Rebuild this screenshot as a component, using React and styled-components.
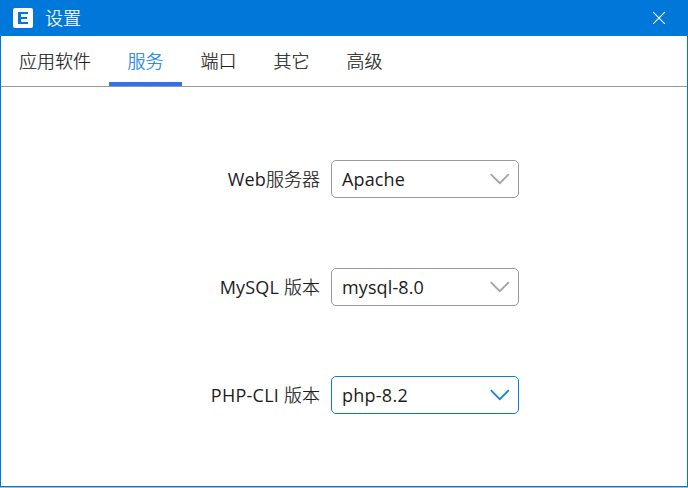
import React, { useState } from "react";
import styled, { createGlobalStyle } from "styled-components";

const GlobalStyle = createGlobalStyle`
  * { box-sizing: border-box; }
  body {
    margin: 0;
    background: #fff;
    font-family: "Open Sans", "Noto Sans CJK SC", sans-serif;
    font-size: 18px;
    color: #1c1c1c;
  }
  button { font: inherit; color: inherit; border: 0; padding: 0; background: none; }
`;

const Window = styled.div`
  width: 688px;
  height: 488px;
  display: flex;
  flex-direction: column;
  background: #fff;
  border: 1px solid #0078d9;
  border-top: 0;
  border-bottom: 0;
`;

const TitleBar = styled.header`
  height: 36px;
  flex: none;
  margin: 0 -1px;
  padding: 0 22px 0 13px;
  display: flex;
  align-items: center;
  background: #0078d9;
  color: #fff;
`;

const Title = styled.h1`
  flex: 1;
  margin: 0 0 0 12px;
  padding-bottom: 2px;
  font-size: 18px;
  font-weight: 300;
  line-height: 34px;
  font-family: "Noto Sans CJK SC", sans-serif;
  -webkit-text-stroke: 0.2px currentColor;
`;

const CloseButton = styled.button`
  display: flex;
  width: 14px;
  height: 14px;
`;

const TabBar = styled.nav`
  height: 51px;
  flex: none;
  display: flex;
  border-bottom: 1px solid #999;
`;

const Tab = styled.button`
  width: ${(p) => (p.$wide ? 108 : 73)}px;
  height: 50px;
  padding-top: 3px;
  padding-bottom: 1px;
  line-height: 42px;
  font-family: "Noto Sans CJK SC", sans-serif;
  font-weight: 300;
  -webkit-text-stroke: 0.2px currentColor;
  white-space: nowrap;
  color: ${(p) => (p.$active ? "#1080e6" : "#1c1c1c")};
  border-bottom: 4px solid ${(p) => (p.$active ? "#3370f0" : "transparent")};
`;

const Form = styled.main`
  flex: 1;
  display: flex;
  flex-direction: column;
  gap: 70px;
  padding-top: 73px;
`;

const Field = styled.div`
  display: flex;
  align-items: center;
  height: 38px;
`;

const Label = styled.label`
  width: 319px;
  margin-right: 11px;
  text-align: right;
  white-space: nowrap;
  line-height: 36px;
  font-weight: 300;
  -webkit-text-stroke: 0.2px currentColor;
`;

const Latin = styled.span`
  font-weight: 400;
  letter-spacing: ${(p) => p.$spacing || 0}px;
  -webkit-text-stroke: 0;
`;

const Select = styled.button`
  width: 188px;
  height: 38px;
  padding: 0 8px 0 10px;
  display: flex;
  align-items: center;
  justify-content: space-between;
  line-height: 36px;
  background: #fff;
  border: 1px solid ${(p) => (p.$focused ? "#0d7cd8" : "#999")};
  border-radius: 5px;
`;

const Chevron = styled.svg`
  color: ${(p) => (p.$focused ? "#1583e0" : "#a3a3a3")};
`;

const Footer = styled.div`
  height: 2px;
  flex: none;
  margin: 0 -1px;
  background: #a8bccb;
  border-top: 1px solid #0078d9;
`;

const tabs = ["应用软件", "服务", "端口", "其它", "高级"];
const fields = [
  { latin: "Web", cjk: "服务器", value: "Apache", ls: 0.2, vs: 0.15 },
  { latin: "MySQL ", cjk: "版本", value: "mysql-8.0", ls: 0.2, vs: 0.12 },
  { latin: "PHP-CLI ", cjk: "版本", value: "php-8.2", ls: 0.25, vs: 0.25, focused: true },
];

function Logo() {
  return (
    <svg width="20" height="20" viewBox="0 0 20 20">
      <rect width="20" height="20" rx="2" fill="#fff" />
      <path d="M5 4h10v2H8v3h6v2H8v3h7v2H5z" fill="#0078d9" />
    </svg>
  );
}

export default function App() {
  const [active, setActive] = useState("服务");
  return (
    <>
      <GlobalStyle />
      <Window>
        <TitleBar>
          <Logo />
          <Title>设置</Title>
          <CloseButton aria-label="关闭">
            <svg width="14" height="14" viewBox="0 0 14 14">
              <path d="M1.2 1.2l11.6 11.6M12.8 1.2l-11.6 11.6" stroke="#fff" strokeWidth="1.1" />
            </svg>
          </CloseButton>
        </TitleBar>
        <TabBar>
          {tabs.map((t) => (
            <Tab key={t} $wide={t.length > 2} $active={t === active} onClick={() => setActive(t)}>
              {t}
            </Tab>
          ))}
        </TabBar>
        <Form>
          {fields.map((f) => (
            <Field key={f.latin}>
              <Label>
                <Latin $spacing={f.ls}>{f.latin}</Latin>
                {f.cjk}
              </Label>
              <Select $focused={f.focused}>
                <Latin $spacing={f.vs}>{f.value}</Latin>
                <Chevron $focused={f.focused} width="20" height="12" viewBox="0 0 20 12">
                  <path d="M.8 1.2l9 9 9-9" fill="none" stroke="currentColor" strokeWidth="1.8" />
                </Chevron>
              </Select>
            </Field>
          ))}
        </Form>
        <Footer />
      </Window>
    </>
  );
}
